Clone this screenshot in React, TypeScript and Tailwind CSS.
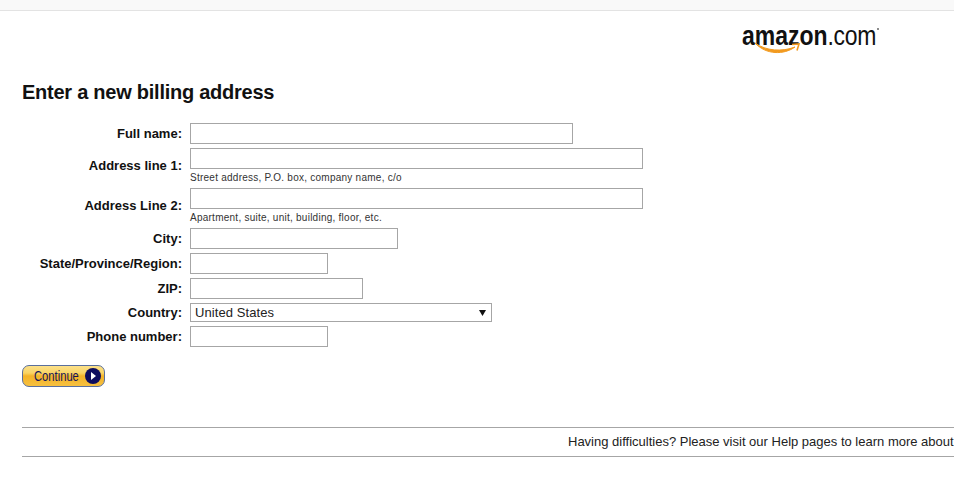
const labelClass = 'w-[182px] shrink-0 text-right text-[13px] font-bold text-[#111]';
const inputClass = 'block h-[21px] border border-[#a6a6a6] bg-white';

const Row = ({ label, width, hint, className = '' }: { label: string; width: string; hint?: string; className?: string }) => (
  <div className={`flex ${className}`}>
    <label className={`${labelClass} ${hint ? 'pt-[8px]' : 'leading-[21px]'}`}>{label}</label>
    <div className="ml-[8px]">
      <div className={`${inputClass} ${width}`} />
      {hint && <p className="mt-[3px] h-[16px] text-[10px] leading-[12px] tracking-[0.25px] text-[#333]">{hint}</p>}
    </div>
  </div>
);

export default function App() {
  return (
    <div className="min-h-[492px] overflow-hidden bg-white font-['Liberation_Sans',Arial,sans-serif] text-black">
      {/* Browser strip at the top */}
      <div className="h-[11px] border-b border-[#e3e3e3] bg-[#f9f9f9]" />

      {/* Logo */}
      <div className="flex h-[47px] justify-end pr-[74px]">
        <div className="relative mt-[10px] h-[36px] w-[138px]">
          <span className="block origin-left scale-x-[0.82] whitespace-nowrap text-[28px] leading-[30px] text-[#111]">
            <span className="font-bold">amazon</span>
            <span className="tracking-[-0.4px]">.com</span>
          </span>
          <span className="absolute left-[135px] top-[7px] h-[2px] w-[2px] rounded-full bg-[#666]" />
          <svg className="absolute left-[12px] top-[21px]" width="48" height="13" viewBox="0 0 48 13">
            <path d="M1 1 C12 9 28 10 41 5 C30 13 12 13 1 1Z" fill="#f29a1f" stroke="#f29a1f" strokeWidth="1" strokeLinejoin="round" />
            <path d="M38 2.5 L45 2 L43 8.5" fill="none" stroke="#f29a1f" strokeWidth="1.6" />
          </svg>
        </div>
      </div>

      <h1 className="ml-[22px] mt-[21px] text-[20px] font-bold leading-[26px] tracking-[-0.25px] text-[#111]">Enter a new billing address</h1>

      <form className="mt-[18px]">
        <Row label="Full name:" width="w-[383px]" />
        <Row className="mt-[4px]" label="Address line 1:" width="w-[453px]" hint="Street address, P.O. box, company name, c/o" />
        <Row label="Address Line 2:" width="w-[453px]" hint="Apartment, suite, unit, building, floor, etc." />
        <Row label="City:" width="w-[208px]" />
        <Row label="State/Province/Region:" width="w-[138px]" className="mt-[4px]" />
        <Row label="ZIP:" width="w-[173px]" className="mt-[4px]" />
        <div className="mt-[4px] flex">
          <label className={`${labelClass} leading-[19px]`}>Country:</label>
          <div className="ml-[8px] flex h-[19px] w-[302px] items-center justify-between border border-[#a6a6a6] pl-[4px] pr-[5px] text-[13px] tracking-[0.08px] text-[#222]">
            <span>United States</span>
            <svg width="7" height="6" viewBox="0 0 7 6"><path d="M0 0H7L3.5 6Z" fill="#111" /></svg>
          </div>
        </div>
        <Row label="Phone number:" width="w-[138px]" className="mt-[4px]" />

        {/* Continue button */}
        <button type="button" className="ml-[22px] mt-[18px] flex h-[22px] w-[83px] items-center rounded-[7px] border border-[#5a6f9c] bg-[linear-gradient(#fbe08a_0%,#f9d465_35%,#f3b328_50%,#f6c040_100%)] pl-[11px] text-[#14145a]">
          <span className="w-[51px] origin-left scale-x-[0.8] whitespace-nowrap text-left text-[14px]">Continue</span>
          <span className="flex h-[16px] w-[16px] items-center justify-center rounded-full bg-[#0d0d5e]">
            <svg width="6" height="8" viewBox="0 0 6 8"><path d="M1 0L6 4L1 8Z" fill="#fff" /></svg>
          </span>
        </button>
      </form>

      {/* Help strip */}
      <div className="ml-[22px] mt-[40px] flex h-[30px] items-center whitespace-nowrap border-y border-[#a6a6a6] text-[13px] text-[#222]">
        <p className="ml-[546px] shrink-0">Having difficulties? Please visit our Help pages to learn more about</p>
      </div>
    </div>
  );
}
